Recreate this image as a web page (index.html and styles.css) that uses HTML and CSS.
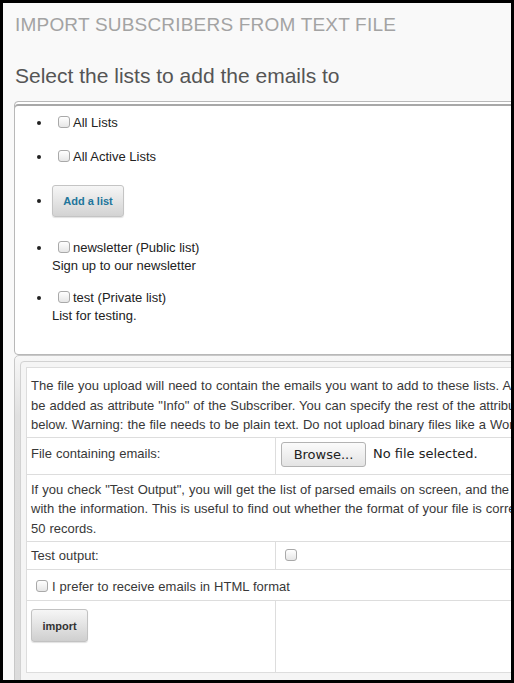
FILE: index.html
```html
<!DOCTYPE html>
<html>
<head>
<meta charset="utf-8">
<link rel="stylesheet" href="styles.css">
</head>
<body>
<div class="frame">
  <div class="page">
    <h1 class="title">Import subscribers from text file</h1>
    <h2 class="subtitle">Select the lists to add the emails to</h2>
    <div class="lists-box">
      <ul class="lists">
        <li class="li-a"><label><input type="checkbox" class="cb">All Lists</label></li>
        <li class="li-b"><label><input type="checkbox" class="cb">All Active Lists</label></li>
        <li class="li-c"><button class="add-btn">Add a list</button></li>
        <li class="li-d"><label><input type="checkbox" class="cb">newsletter (Public list)</label><br>Sign up to our newsletter</li>
        <li class="li-e"><label><input type="checkbox" class="cb">test (Private list)</label><br>List for testing.</li>
      </ul>
    </div>
    <div class="panel">
      <div class="panel-inner">
        <table class="form-table">
          <colgroup><col class="c1"><col class="c2"></colgroup>
          <tr><td colspan="2" class="intro">The file you upload will need to contain the emails you want to add to these lists. Any other data in the file will be added as attribute "Info" of the Subscriber. You can specify the rest of the attributes of these subscribers below. Warning: the file needs to be plain text. Do not upload binary files like a Word document.</td></tr>
          <tr class="file-row"><td class="file-label">File containing emails:</td><td class="file-cell"><span class="browse">Browse...</span><span class="nofile">No file selected.</span></td></tr>
          <tr><td colspan="2" class="info">If you check "Test Output", you will get the list of parsed emails on screen, and the database will not be filled with the information. This is useful to find out whether the format of your file is correct. It will only show the first 50 records.</td></tr>
          <tr class="test-row"><td>Test output:</td><td class="test-cell"><input type="checkbox" class="cb cb-plain"></td></tr>
          <tr><td colspan="2" class="html-cell"><label><input type="checkbox" class="cb cb-html">I prefer to receive emails in HTML format</label></td></tr>
          <tr class="last-row"><td class="import-cell"><button class="import-btn">import</button></td><td></td></tr>
        </table>
      </div>
    </div>
  </div>
</div>
</body>
</html>
```
FILE: styles.css
```css
html, body {
  margin: 0;
  padding: 0;
  background: #000;
}
.frame {
  width: 514px;
  height: 683px;
  box-sizing: border-box;
  border: 3px solid #000;
  background: #f9f9f9;
  overflow: hidden;
}
.page {
  width: 760px;
  padding: 0 0 0 11px;
  font-family: "Liberation Sans", Arial, sans-serif;
  color: #333;
}
.title {
  margin: 11px 0 0 1px;
  font-size: 19px;
  line-height: 22px;
  font-weight: normal;
  letter-spacing: 0.2px;
  text-transform: uppercase;
  color: #a3a3a3;
}
.subtitle {
  margin: 28px 0 0 1px;
  font-size: 21px;
  line-height: 24px;
  font-weight: normal;
  color: #555;
}
.lists-box {
  margin-top: 13px;
  width: 700px;
  background: #fff;
  border: 1px solid #b8b8b8;
  border-radius: 4px;
  box-shadow: inset 0 2px 0 #fff, inset 0 4px 0 #a8a8a8;
}
.lists {
  margin: 0;
  padding: 12px 0 29px 37px;
  font-size: 13px;
  line-height: 18px;
  color: #222;
}
.lists li {
  margin-bottom: 16px;
}
.lists li.li-d { margin-bottom: 14px; }
.lists li.li-e { margin-bottom: 0; }
.cb {
  -webkit-appearance: none;
  appearance: none;
  width: 12px;
  height: 12px;
  margin: 0 3px 0 6px;
  border: 1px solid #a9a9a9;
  border-radius: 3px;
  background: linear-gradient(#ffffff, #e6e6e6);
  vertical-align: -1px;
  box-sizing: border-box;
}
.add-btn {
  margin: 3px 0 6px 0;
  width: 72px;
  height: 32px;
  padding: 0;
  font-family: "Liberation Sans", Arial, sans-serif;
  font-size: 11px;
  font-weight: bold;
  color: #21759b;
  background: linear-gradient(#f6f6f6, #d3d3d3);
  border: 1px solid #c4c4c4;
  border-radius: 3px;
  box-shadow: 0 1px 1px rgba(0,0,0,0.12);
}
.panel {
  width: 700px;
  background: linear-gradient(#f7f7f7, #e0e0e0 60px, #dcdcdc);
  border: 1px solid #c8c8c8;
  border-radius: 5px;
  padding: 5px;
  box-sizing: border-box;
  height: 330px;
}
.panel-inner {
  background: #f5f5f5;
  border: 1px solid #d2d2d2;
  border-radius: 4px;
  padding: 5px;
  height: 330px;
}
.form-table {
  border-collapse: collapse;
  table-layout: fixed;
  width: 660px;
  background: #fff;
  border: 1px solid #ddd;
  font-size: 13px;
  line-height: 19.5px;
  word-spacing: 0.4px;
  color: #383838;
}
.c1 { width: 249px; }
.form-table td {
  border: 1px solid #ddd;
  padding: 4px 4px;
  vertical-align: top;
}
.form-table td.intro {
  padding-top: 8px;
  padding-bottom: 2px;
}
.form-table td.info {
  padding-top: 5px;
  padding-bottom: 3px;
}
.form-table .test-row td {
  padding-top: 4px;
  padding-bottom: 3px;
}
.file-cell {
  white-space: nowrap;
}
.form-table td.file-label {
  padding-top: 6px;
}
.form-table td.file-cell {
  padding: 4px 5px 7px 5px;
}
.browse {
  display: inline-block;
  box-sizing: border-box;
  width: 85px;
  height: 25px;
  line-height: 23px;
  text-align: center;
  font-family: "DejaVu Sans", sans-serif;
  font-size: 13px;
  word-spacing: 0;
  color: #222;
  background: linear-gradient(#fbfbfb, #e4e4e4);
  border: 1px solid #b3b3b3;
  border-radius: 3px;
  vertical-align: middle;
}
.nofile {
  font-family: "DejaVu Sans", sans-serif;
  font-size: 13px;
  word-spacing: 0;
  color: #222;
  margin-left: 7px;
  vertical-align: middle;
}
.form-table td.test-cell {
  padding-left: 9px;
}
.cb-plain {
  margin: 0;
}
.form-table td.html-cell {
  padding: 7px 4px 4px 9px;
}
.cb-html {
  margin: 0 4px 0 0;
}
.form-table td.import-cell {
  height: 63px;
  padding: 8px 4px 0 4px;
}
.import-btn {
  width: 57px;
  height: 33px;
  padding: 0;
  font-family: "Liberation Sans", Arial, sans-serif;
  font-size: 11px;
  font-weight: bold;
  word-spacing: 0;
  color: #333;
  background: linear-gradient(#f6f6f6, #cfcfcf);
  border: 1px solid #c2c2c2;
  border-radius: 3px;
  box-shadow: 0 1px 1px rgba(0,0,0,0.12);
}
```
